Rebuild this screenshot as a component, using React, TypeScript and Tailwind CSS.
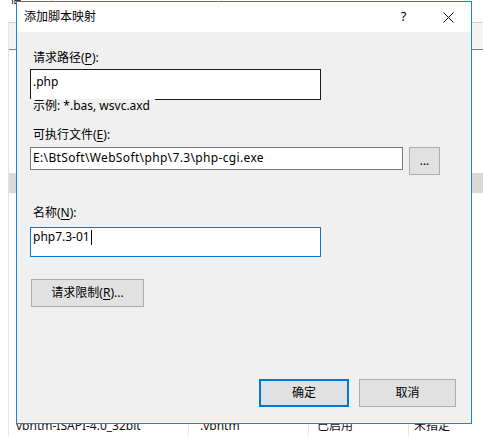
import React from "react";

const F = "font-['Noto_Sans','Noto_Sans_CJK_SC',sans-serif]";

function U({ c }: { c: string }) {
  return <span className="underline underline-offset-[2px] decoration-1">{c}</span>;
}

export default function App() {
  return (
    <div className={`relative w-[483px] h-[436px] overflow-hidden bg-white text-[12px] text-black ${F}`}>
      {/* background window */}
      <div className="flex h-[22px]">
        <div className="w-[53px] pl-[10px] border-r border-[#d9d9d9] leading-[16px] -mt-[9px]">信</div>
        <div className="w-[169px] border-r border-[#d9d9d9]" />
        <div className="flex-1" />
      </div>
      <div className="ml-[8px] border-l border-[#e3e3e3] flex flex-col h-[414px]">
        <div className="h-[28px] bg-[#f3f3f3] border-t border-[#cfcfcf] border-b border-b-[#6d84a3]" />
        <div className="h-[123px]" />
        <div className="h-[20px] bg-[#d9d9d9]" />
        <div className="h-[223px]" />
        <div className="flex h-[20px] leading-[20px] text-[#111]">
          <div className="w-[180px] pl-[7px] border-r border-[#e2e8ef]">vbhtm-ISAPI-4.0_32bit</div>
          <div className="w-[120px] pl-[11px] border-r border-[#e2e8ef]">.vbhtm</div>
          <div className="w-[100px] pl-[8px] border-r border-[#e2e8ef]">已启用</div>
          <div className="flex-1 pl-[5px]">未指定</div>
        </div>
      </div>

      {/* dialog */}
      <div className="absolute left-[16px] top-[1px] w-[456px] h-[423px] border border-[#1883d7] flex flex-col bg-[#f0f0f0]">
        <div className="h-[30px] bg-white flex items-center">
          <div className="flex-1 pl-[7px] leading-[16px]">添加脚本映射</div>
          <div className="w-[45px] h-[30px] flex items-center justify-center text-[13px]">?</div>
          <div className="w-[45px] h-[30px] flex items-center justify-center">
            <svg width="11" height="11" viewBox="0 0 11 11">
              <path d="M0.5 0.5 L10.5 10.5 M10.5 0.5 L0.5 10.5" stroke="#111" strokeWidth="1" fill="none" />
            </svg>
          </div>
        </div>
        <div className="flex-1 flex flex-col pl-[13px] pt-[18px]">
          <div className="ml-[3px] leading-[16px]">
            请求路径(<U c="P" />):
          </div>
          <div className="mt-[3px] w-[291px] h-[31px] border border-[#1a1a1a] bg-white pl-[2px] pt-[4px] leading-[16px]">
            .php
          </div>
          <div className="relative -mt-px w-[125px] bg-[#f0f0f0] pl-[3px] leading-[14px]">
            示例: *.bas, wsvc.axd
          </div>
          <div className="mt-[14px] ml-[3px] leading-[16px]">
            可执行文件(<U c="E" />):
          </div>
          <div className="mt-[4px] flex items-start h-[28px]">
            <div className="w-[373px] h-[23px] border border-[#7a7a7a] bg-white pl-[2px] pt-[2px] leading-[16px] tracking-[0.35px] whitespace-nowrap overflow-hidden">
              E:\BtSoft\WebSoft\php\7.3\php-cgi.exe
            </div>
            <div className="ml-[6px] w-[31px] h-[28px] border border-[#adadad] bg-[#e1e1e1] flex items-center justify-center leading-[16px]">
              ...
            </div>
          </div>
          <div className="mt-[30px] ml-[3px] leading-[16px]">
            名称(<U c="N" />):
          </div>
          <div className="mt-[6px] w-[291px] h-[30px] border border-[#0078d7] bg-white pl-[2px] pt-[1px] leading-[16px] flex items-start">
            <span>php7.3-01</span>
            <span className="inline-block w-px h-[15px] bg-black ml-[1px] mt-[1px]" />
          </div>
          <div className="mt-[22px] ml-px w-[113px] h-[28px] border border-[#adadad] bg-[#e1e1e1] flex items-center justify-center leading-[16px]">
            请求限制(<U c="R" />)...
          </div>
          <div className="mt-auto pb-[16px] pr-[15px] flex justify-end gap-[10px]">
            <div className="w-[90px] h-[28px] border-2 border-[#0078d7] bg-[#e1e1e1] flex items-center justify-center leading-[16px]">
              确定
            </div>
            <div className="w-[97px] h-[28px] border border-[#adadad] bg-[#e1e1e1] flex items-center justify-center leading-[16px]">
              取消
            </div>
          </div>
        </div>
      </div>
    </div>
  );
}
